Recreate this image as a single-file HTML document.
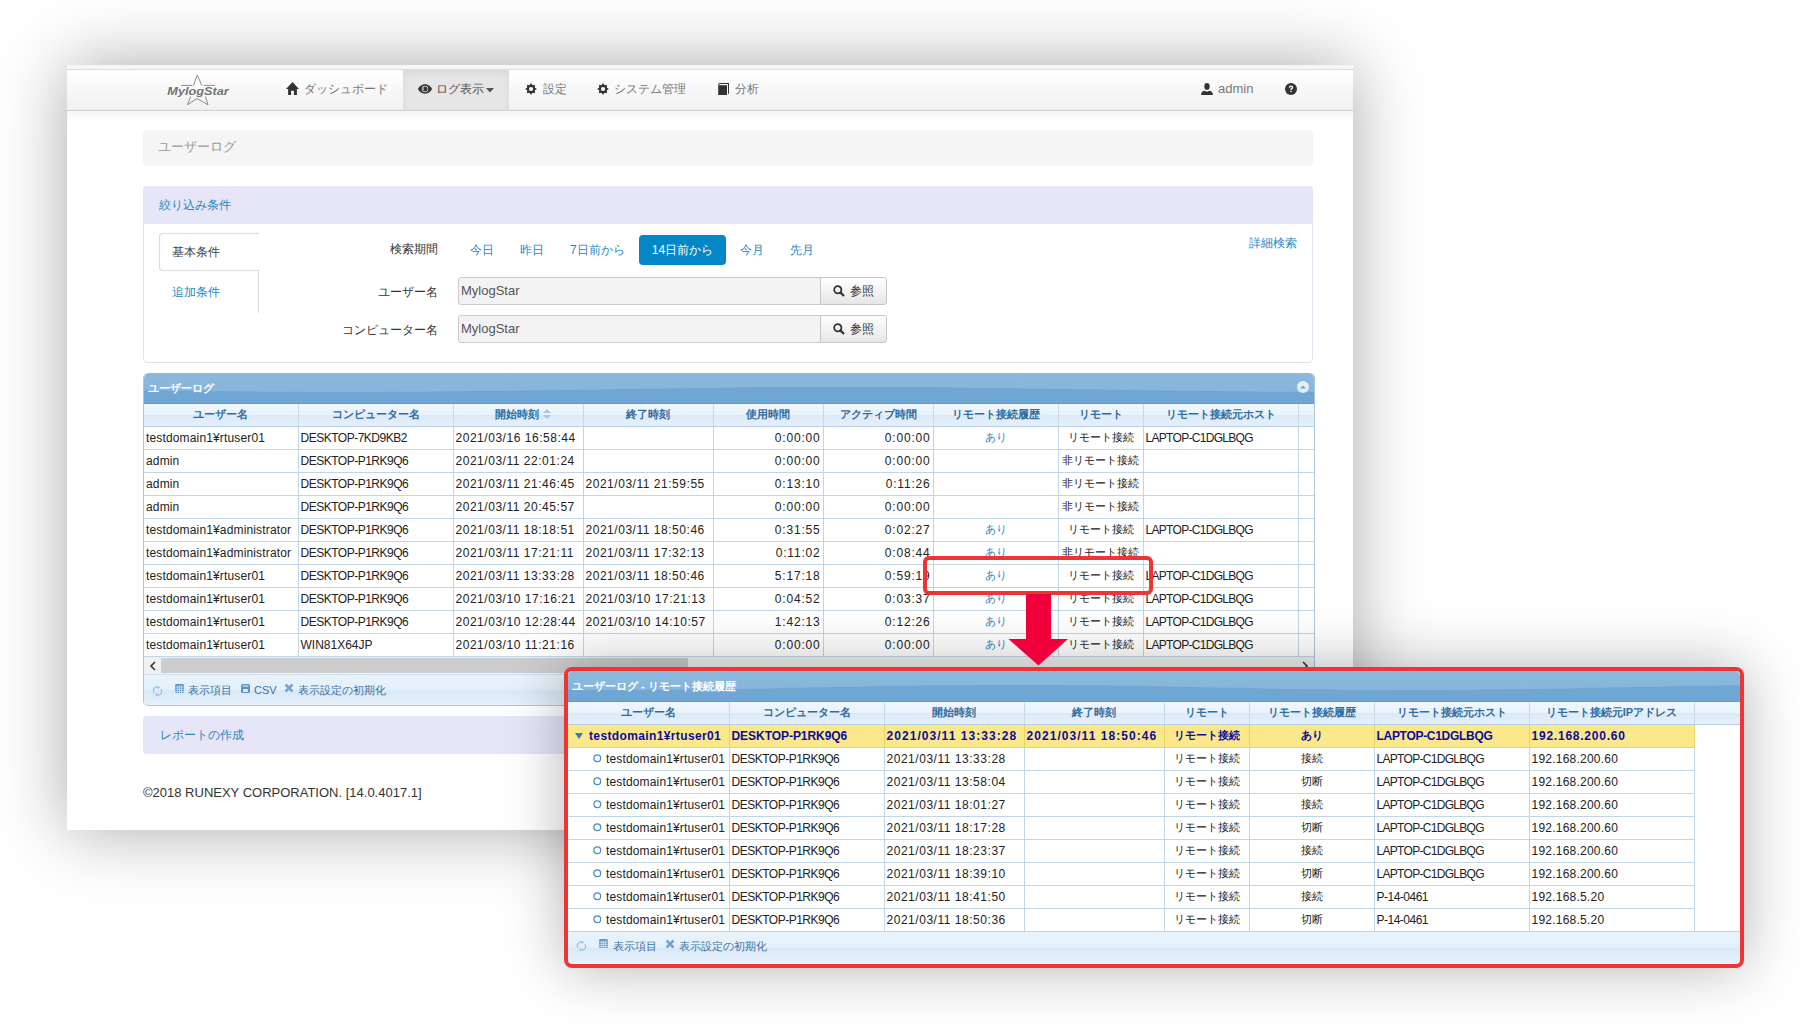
<!DOCTYPE html><html><head><meta charset="utf-8"><style>
*{box-sizing:border-box;margin:0;padding:0}
html,body{width:1805px;height:1031px;overflow:hidden;background:#fff}
body{position:relative;font-family:"Liberation Sans",sans-serif;font-size:12px;color:#222}
.abs{position:absolute;white-space:nowrap}
#win{position:absolute;left:67px;top:65px;width:1286px;height:765px;background:#fff;box-shadow:0 0 66px rgba(0,0,0,.34)}
#strip{position:absolute;left:67px;top:65px;width:1286px;height:4px;background:#f6f6f6}
#nav{position:absolute;left:67px;top:69px;width:1286px;height:42px;background:linear-gradient(#fff,#f1f1f1);border-top:1px solid #dcdcdc;border-bottom:1px solid #cfcfcf}
#navshadow{position:absolute;left:67px;top:111px;width:1286px;height:10px;background:linear-gradient(rgba(0,0,0,.035),rgba(0,0,0,0))}
.navtxt{position:absolute;top:81px;font-size:12px;line-height:16px;color:#777;white-space:nowrap}
#active{position:absolute;left:403px;top:70px;width:106px;height:40px;background:#e6e6e6;box-shadow:inset 0 3px 9px rgba(0,0,0,.06)}
.ico{position:absolute}
#crumb{position:absolute;left:143px;top:130px;width:1170px;height:36px;background:#f5f5f5;border-radius:4px}
#crumb span{position:absolute;left:15px;top:9px;font-size:13px;line-height:16px;color:#9a9a9a}
#filter{position:absolute;left:143px;top:186px;width:1170px;height:177px;border:1px solid #e2e2ee;border-radius:4px;background:#fff}
#filterhd{position:absolute;left:143px;top:186px;width:1170px;height:38px;background:#e6e6f8;border-radius:4px 4px 0 0}
.link{color:#2a88c5}
.t12{font-size:12px;line-height:16px}
.lbl{position:absolute;font-size:12px;line-height:16px;color:#333;white-space:nowrap;text-align:right;width:120px}
.pbtn{position:absolute;font-size:12px;line-height:16px;color:#2a88c5;white-space:nowrap}
#btn14{position:absolute;left:639px;top:235px;width:87px;height:30px;background:#0487c9;border-radius:4px;color:#fff;font-size:12px;line-height:30px;text-align:center}
.inp{position:absolute;left:458px;width:363px;height:28px;background:#f4f3f3;border:1px solid #cbcbcb;border-radius:3px 0 0 3px;font-size:13px;line-height:26px;padding-left:2px;color:#555}
.refbtn{position:absolute;left:820px;width:67px;height:28px;background:linear-gradient(#fff,#e6e6e6);border:1px solid #c6c6c6;border-radius:0 3px 3px 0;font-size:12px;line-height:26px;color:#333}
.grid{position:absolute;overflow:hidden}
.ghd{position:absolute;left:0;top:0;right:0;height:30px;border-radius:5px 5px 0 0;overflow:hidden}
.ghd span{position:absolute;left:4px;top:7px;color:#fff;font-weight:bold;font-size:11px;line-height:16px}
table{border-collapse:collapse;table-layout:fixed;position:absolute;left:0}
th{height:22px;background:linear-gradient(#eff6fd 0%,#e9f3fc 48%,#dce9f7 52%,#e5f0fb 100%);color:#2f6c9f;font-weight:bold;font-size:11px;border-right:1px solid #c6d9ea;border-bottom:1px solid #b9d0e4;white-space:nowrap;overflow:hidden;text-align:center;padding:0}
td{height:23px;border-right:1px solid #bfd5e8;border-bottom:1px solid #bfd5e8;white-space:nowrap;overflow:hidden;font-size:12px;padding:0 2px;color:#222;background:#fff}
td.r{text-align:right}
td.c{text-align:center}
.j{font-size:11px}
.aari{color:#2a88c5;font-size:11px}
.lu{letter-spacing:.15px}.lp{letter-spacing:-.5px}.ld{letter-spacing:.53px}.lh{letter-spacing:-.7px}.li{letter-spacing:.23px}.lt{letter-spacing:.8px}
tr.sel td{background:#fbe88b;color:#0c0c9c;font-weight:bold;border-bottom-color:#ecd26a;border-right-color:#ecd26a}
tr.sel .lu{letter-spacing:.37px}tr.sel .lp{letter-spacing:-.05px}tr.sel .ld{letter-spacing:1.05px}tr.sel .lh{letter-spacing:-.3px}tr.sel .li{letter-spacing:.77px}
.gft{position:absolute;left:0;right:0;background:linear-gradient(#e9f3fc 0%,#e5f0fb 45%,#d9e9f8 52%,#e8f2fb 100%);}
.gft span{position:absolute;color:#3b70a2;font-size:11px;line-height:16px;white-space:nowrap}
.gft svg{position:absolute}
</style></head><body>
<div id="win"></div>
<div id="strip"></div>
<div id="nav"></div>
<div id="navshadow"></div>
<div id="active"></div>
<svg class="ico" style="left:165px;top:72px" width="68" height="36" viewBox="0 0 68 36">
<path d="M32.3 3 L28.5 13.4 M32.3 3 L36.8 13.4 M16 13.4 L27.4 13.4 M38.6 13.4 L50 13.4 M25.7 24.5 L22.4 32.8 L32 26.5 L43 32.8 L40.5 24.5" fill="none" stroke="#8a8a8a" stroke-width="1"/>
<text x="2.3" y="23" font-family="Liberation Sans" font-size="11" font-weight="bold" font-style="italic" fill="#747474" textLength="61.5" lengthAdjust="spacingAndGlyphs">MylogStar</text>
</svg>
<svg class="ico" style="left:286px;top:82px" width="13" height="13" viewBox="0 0 13 13"><path d="M6.5 0 L0 6.9 H2.1 V13 H5.1 V8.7 H7.9 V13 H10.9 V6.9 H13Z" fill="#333"/></svg>
<span class="navtxt" style="left:304px">ダッシュボード</span>
<svg class="ico" style="left:418px;top:84px" width="14" height="10" viewBox="0 0 14 10"><path d="M7 0.3C3.5 0.3 1 2.8 0 5C1 7.2 3.5 9.7 7 9.7C10.5 9.7 13 7.2 14 5C13 2.8 10.5 0.3 7 0.3Z" fill="#333"/><circle cx="7" cy="5" r="3.2" fill="#e6e6e6"/><circle cx="7" cy="5" r="2.5" fill="#333"/><path d="M5.6 3.6A1.8 1.8 0 0 0 5.9 6" fill="none" stroke="#e6e6e6" stroke-width=".7"/></svg>
<span class="navtxt" style="left:436px;color:#555">ログ表示</span>
<svg class="ico" style="left:486px;top:88px" width="8" height="5" viewBox="0 0 8 5"><path d="M0 0H8L4 4.5Z" fill="#555"/></svg>
<svg class="ico" style="left:525px;top:83px" width="12" height="12" viewBox="0 0 12 12"><path d="M9.47 4.45L11.90 6.00L9.47 7.55ZM9.55 7.36L10.17 10.17L7.36 9.55ZM7.55 9.47L6.00 11.90L4.45 9.47ZM4.64 9.55L1.83 10.17L2.45 7.36ZM2.53 7.55L0.10 6.00L2.53 4.45ZM2.45 4.64L1.83 1.83L4.64 2.45ZM4.45 2.53L6.00 0.10L7.55 2.53ZM7.36 2.45L10.17 1.83L9.55 4.64Z" fill="#333"/><circle cx="6" cy="6" r="4.2" fill="#333"/><circle cx="6" cy="6" r="2.1" fill="#f8f8f8"/></svg>
<span class="navtxt" style="left:543px">設定</span>
<svg class="ico" style="left:597px;top:83px" width="12" height="12" viewBox="0 0 12 12"><path d="M9.47 4.45L11.90 6.00L9.47 7.55ZM9.55 7.36L10.17 10.17L7.36 9.55ZM7.55 9.47L6.00 11.90L4.45 9.47ZM4.64 9.55L1.83 10.17L2.45 7.36ZM2.53 7.55L0.10 6.00L2.53 4.45ZM2.45 4.64L1.83 1.83L4.64 2.45ZM4.45 2.53L6.00 0.10L7.55 2.53ZM7.36 2.45L10.17 1.83L9.55 4.64Z" fill="#333"/><circle cx="6" cy="6" r="4.2" fill="#333"/><circle cx="6" cy="6" r="2.1" fill="#f8f8f8"/></svg>
<span class="navtxt" style="left:614px">システム管理</span>
<svg class="ico" style="left:718px;top:83px" width="11" height="12" viewBox="0 0 11 12"><path d="M0.2 2Q0.2 0 2 0H11V10.8H10V1H2Q1.2 1 1.2 2.2Z" fill="#333"/><rect x="0.2" y="2.2" width="8.8" height="9.8" fill="#333"/></svg>
<span class="navtxt" style="left:735px">分析</span>
<svg class="ico" style="left:1201px;top:83px" width="12" height="12" viewBox="0 0 12 12"><ellipse cx="6" cy="3.4" rx="2.7" ry="3.4" fill="#333"/><path d="M0 12Q0.2 8.3 3.6 7.7L6 8.8L8.4 7.7Q11.8 8.3 12 12Z" fill="#333"/></svg>
<span class="navtxt" style="left:1218px;font-size:13px">admin</span>
<svg class="ico" style="left:1285px;top:83px" width="12" height="12" viewBox="0 0 12 12"><circle cx="6" cy="6" r="6" fill="#333"/><path d="M4.5 4.7Q4.5 3.1 6 3.1Q7.5 3.1 7.5 4.4Q7.5 5.2 6.6 5.7Q6 6 6 6.9" fill="none" stroke="#fff" stroke-width="1.4"/><rect x="5.3" y="7.8" width="1.4" height="1.3" fill="#fff"/></svg>

<div id="crumb"><span>ユーザーログ</span></div>

<div id="filter"></div>
<div id="filterhd"></div>
<span class="abs link t12" style="left:159px;top:197px">絞り込み条件</span>
<div class="abs" style="left:159px;top:233px;width:100px;height:38px;border:1px solid #dcdcdc;border-right:none;border-radius:4px 0 0 4px;background:#fff"></div>
<div class="abs" style="left:258px;top:270px;width:1px;height:43px;background:#dcdcdc"></div>
<span class="abs t12" style="left:172px;top:244px;color:#444">基本条件</span>
<span class="abs link t12" style="left:172px;top:284px">追加条件</span>
<span class="lbl" style="left:318px;top:241px">検索期間</span>
<span class="pbtn" style="left:470px;top:242px">今日</span>
<span class="pbtn" style="left:520px;top:242px">昨日</span>
<span class="pbtn" style="left:570px;top:242px">7日前から</span>
<div id="btn14">14日前から</div>
<span class="pbtn" style="left:740px;top:242px">今月</span>
<span class="pbtn" style="left:790px;top:242px">先月</span>
<span class="abs link t12" style="left:1249px;top:235px">詳細検索</span>
<span class="lbl" style="left:318px;top:284px">ユーザー名</span>
<span class="lbl" style="left:318px;top:322px">コンピューター名</span>
<div class="inp" style="top:277px">MylogStar</div>
<div class="refbtn" style="top:277px"><svg width="12" height="12" viewBox="0 0 12 12" style="position:absolute;left:12px;top:7px"><circle cx="4.8" cy="4.8" r="3.6" fill="none" stroke="#333" stroke-width="1.8"/><path d="M7.4 7.4L11 11" stroke="#333" stroke-width="2.2"/></svg><span style="position:absolute;left:29px">参照</span></div>
<div class="inp" style="top:315px">MylogStar</div>
<div class="refbtn" style="top:315px"><svg width="12" height="12" viewBox="0 0 12 12" style="position:absolute;left:12px;top:7px"><circle cx="4.8" cy="4.8" r="3.6" fill="none" stroke="#333" stroke-width="1.8"/><path d="M7.4 7.4L11 11" stroke="#333" stroke-width="2.2"/></svg><span style="position:absolute;left:29px">参照</span></div>

<div class="grid" style="left:143px;top:373px;width:1172px;height:333px;border:1px solid #a9c8e2;border-top:none;border-radius:5px;background:#fff">
 <div class="ghd" style="height:31px"><svg width="1172" height="31" viewBox="0 0 1172 31" style="position:absolute;left:0;top:0"><defs><linearGradient id="g1172" x1="0" y1="0" x2="0" y2="1"><stop offset="0" stop-color="#8cb9dd"/><stop offset="1" stop-color="#84b3d9"/></linearGradient></defs><rect width="1172" height="31" fill="url(#g1172)"/><path d="M0,17.2 L0,17.2 L20,17.5 L40,17.8 L60,18.1 L80,18.3 L100,18.5 L120,18.7 L140,18.8 L160,18.9 L180,19.0 L200,19.0 L220,19.0 L240,18.9 L260,18.8 L280,18.7 L300,18.5 L320,18.3 L340,18.1 L360,17.9 L380,17.6 L400,17.3 L420,17.0 L440,16.7 L460,16.4 L480,16.1 L500,15.8 L520,15.5 L540,15.2 L560,14.9 L580,14.7 L600,14.5 L620,14.3 L640,14.2 L660,14.1 L680,14.0 L700,14.0 L720,14.0 L740,14.1 L760,14.2 L780,14.3 L800,14.5 L820,14.7 L840,14.9 L860,15.1 L880,15.4 L900,15.7 L920,16.0 L940,16.3 L960,16.6 L980,16.9 L1000,17.2 L1020,17.5 L1040,17.8 L1060,18.1 L1080,18.3 L1100,18.5 L1120,18.7 L1140,18.8 L1160,18.9 L1180,19.0 L1172,31 L0,31Z" fill="#6fa6d3"/><rect y="30" width="1172" height="1" fill="#5f9ccd"/></svg><span>ユーザーログ</span><svg style="position:absolute;right:5px;top:8px" width="12" height="12" viewBox="0 0 12 12"><circle cx="6" cy="6" r="6" fill="#e4eef7"/><path d="M3 7.5L6 4.5L9 7.5Z" fill="#6aa2d0"/></svg></div>
 <table style="top:31px;width:1172px"><colgroup><col style="width:154px"><col style="width:155px"><col style="width:130px"><col style="width:130px"><col style="width:110px"><col style="width:110px"><col style="width:125px"><col style="width:85px"><col style="width:155px"><col style="width:18px"></colgroup><tr><th>ユーザー名</th><th>コンピューター名</th><th><span style="margin-left:10px">開始時刻<svg width='8' height='10' viewBox='0 0 8 10' style='vertical-align:-1px;margin-left:4px'><path d='M0 4 L4 0 L8 4Z' fill='#a9c6e0'/><path d='M0 6 L4 10 L8 6Z' fill='#a9c6e0'/></svg></span></th><th>終了時刻</th><th>使用時間</th><th>アクティブ時間</th><th>リモート接続履歴</th><th>リモート</th><th>リモート接続元ホスト</th><th></th></tr><tr><td class=""><span class="lu">testdomain1¥rtuser01</span></td><td class=""><span class="lp">DESKTOP-7KD9KB2</span></td><td class=""><span class="ld">2021/03/16 16:58:44</span></td><td class=""></td><td class="r"><span class="lt">0:00:00</span></td><td class="r"><span class="lt">0:00:00</span></td><td class="c"><span class="aari">あり</span></td><td class="c"><span class="j">リモート接続</span></td><td class=""><span class="lh">LAPTOP-C1DGLBQG</span></td><td class=""></td></tr><tr><td class=""><span class="lu">admin</span></td><td class=""><span class="lp">DESKTOP-P1RK9Q6</span></td><td class=""><span class="ld">2021/03/11 22:01:24</span></td><td class=""></td><td class="r"><span class="lt">0:00:00</span></td><td class="r"><span class="lt">0:00:00</span></td><td class="c"></td><td class="c"><span class="j">非リモート接続</span></td><td class=""></td><td class=""></td></tr><tr><td class=""><span class="lu">admin</span></td><td class=""><span class="lp">DESKTOP-P1RK9Q6</span></td><td class=""><span class="ld">2021/03/11 21:46:45</span></td><td class=""><span class="ld">2021/03/11 21:59:55</span></td><td class="r"><span class="lt">0:13:10</span></td><td class="r"><span class="lt">0:11:26</span></td><td class="c"></td><td class="c"><span class="j">非リモート接続</span></td><td class=""></td><td class=""></td></tr><tr><td class=""><span class="lu">admin</span></td><td class=""><span class="lp">DESKTOP-P1RK9Q6</span></td><td class=""><span class="ld">2021/03/11 20:45:57</span></td><td class=""></td><td class="r"><span class="lt">0:00:00</span></td><td class="r"><span class="lt">0:00:00</span></td><td class="c"></td><td class="c"><span class="j">非リモート接続</span></td><td class=""></td><td class=""></td></tr><tr><td class=""><span class="lu">testdomain1¥administrator</span></td><td class=""><span class="lp">DESKTOP-P1RK9Q6</span></td><td class=""><span class="ld">2021/03/11 18:18:51</span></td><td class=""><span class="ld">2021/03/11 18:50:46</span></td><td class="r"><span class="lt">0:31:55</span></td><td class="r"><span class="lt">0:02:27</span></td><td class="c"><span class="aari">あり</span></td><td class="c"><span class="j">リモート接続</span></td><td class=""><span class="lh">LAPTOP-C1DGLBQG</span></td><td class=""></td></tr><tr><td class=""><span class="lu">testdomain1¥administrator</span></td><td class=""><span class="lp">DESKTOP-P1RK9Q6</span></td><td class=""><span class="ld">2021/03/11 17:21:11</span></td><td class=""><span class="ld">2021/03/11 17:32:13</span></td><td class="r"><span class="lt">0:11:02</span></td><td class="r"><span class="lt">0:08:44</span></td><td class="c"><span class="aari">あり</span></td><td class="c"><span class="j">非リモート接続</span></td><td class=""></td><td class=""></td></tr><tr><td class=""><span class="lu">testdomain1¥rtuser01</span></td><td class=""><span class="lp">DESKTOP-P1RK9Q6</span></td><td class=""><span class="ld">2021/03/11 13:33:28</span></td><td class=""><span class="ld">2021/03/11 18:50:46</span></td><td class="r"><span class="lt">5:17:18</span></td><td class="r"><span class="lt">0:59:19</span></td><td class="c"><span class="aari">あり</span></td><td class="c"><span class="j">リモート接続</span></td><td class=""><span class="lh">LAPTOP-C1DGLBQG</span></td><td class=""></td></tr><tr><td class=""><span class="lu">testdomain1¥rtuser01</span></td><td class=""><span class="lp">DESKTOP-P1RK9Q6</span></td><td class=""><span class="ld">2021/03/10 17:16:21</span></td><td class=""><span class="ld">2021/03/10 17:21:13</span></td><td class="r"><span class="lt">0:04:52</span></td><td class="r"><span class="lt">0:03:37</span></td><td class="c"><span class="aari">あり</span></td><td class="c"><span class="j">リモート接続</span></td><td class=""><span class="lh">LAPTOP-C1DGLBQG</span></td><td class=""></td></tr><tr><td class=""><span class="lu">testdomain1¥rtuser01</span></td><td class=""><span class="lp">DESKTOP-P1RK9Q6</span></td><td class=""><span class="ld">2021/03/10 12:28:44</span></td><td class=""><span class="ld">2021/03/10 14:10:57</span></td><td class="r"><span class="lt">1:42:13</span></td><td class="r"><span class="lt">0:12:26</span></td><td class="c"><span class="aari">あり</span></td><td class="c"><span class="j">リモート接続</span></td><td class=""><span class="lh">LAPTOP-C1DGLBQG</span></td><td class=""></td></tr><tr><td class=""><span class="lu">testdomain1¥rtuser01</span></td><td class=""><span class="lp"><span style='letter-spacing:0'>WIN81X64JP</span></span></td><td class=""><span class="ld">2021/03/10 11:21:16</span></td><td class=""></td><td class="r"><span class="lt">0:00:00</span></td><td class="r"><span class="lt">0:00:00</span></td><td class="c"><span class="aari">あり</span></td><td class="c"><span class="j">リモート接続</span></td><td class=""><span class="lh">LAPTOP-C1DGLBQG</span></td><td class=""></td></tr></table>
 <div class="abs" style="left:0;top:284px;width:1172px;height:17px;background:#f1f1f1"></div>
 <div class="abs" style="left:17px;top:285px;width:527px;height:15px;background:#cdcdcd"></div>
 <svg class="abs" style="left:5px;top:288px" width="7" height="10" viewBox="0 0 7 10"><path d="M6 1L2 5L6 9" fill="none" stroke="#333" stroke-width="1.6"/></svg>
 <svg class="abs" style="left:1158px;top:288px" width="7" height="10" viewBox="0 0 7 10"><path d="M1 1L5 5L1 9" fill="none" stroke="#333" stroke-width="1.6"/></svg>
 <div class="gft" style="top:301px;height:32px;border-top:1px solid #cfe0ef">
  <svg width="11" height="12" viewBox="0 0 11 12" style="left:8px;top:10px"><path d="M2.2 7.8A3.6 3.6 0 0 1 6.5 2.3M8.8 4.2A3.6 3.6 0 0 1 4.5 9.7" fill="none" stroke="#95bfe3" stroke-width="1.2"/><path d="M5.6 0.6L8 2.4L5.6 4Z M5.4 8L3 9.6L5.4 11.4Z" fill="#95bfe3"/></svg>
  <svg width="9" height="9" viewBox="0 0 9 9" style="left:31px;top:9px"><rect x="0" y="0" width="9" height="9" rx="1.6" fill="#5b94c7"/><path d="M0 3.1H9M0 5.3H9M0 7.4H9M2.6 1.5V9M4.6 1.5V9M6.6 1.5V9" stroke="#e2eef9" stroke-width=".7"/></svg><span style="left:44px;top:7px">表示項目</span>
  <svg width="9" height="9" viewBox="0 0 9 9" style="left:97px;top:9px"><rect width="9" height="9" rx="1.6" fill="#5b94c7"/><rect x="1.6" y="1.4" width="5.8" height="1.1" fill="#e2eef9"/><rect x="2.2" y="5" width="4.6" height="3" fill="#e2eef9"/></svg><span style="left:110px;top:7px">CSV</span>
  <svg width="10" height="10" viewBox="0 0 10 10" style="left:140px;top:8px"><path d="M1.5 1.5L8.5 8.5M8.5 1.5L1.5 8.5" stroke="#74a5d2" stroke-width="2.5"/></svg><span style="left:154px;top:7px">表示設定の初期化</span>
 </div>
</div>

<div class="abs" style="left:143px;top:716px;width:1170px;height:38px;background:#e6e6f8;border-radius:4px"></div>
<span class="abs link t12" style="left:160px;top:727px">レポートの作成</span>
<span class="abs" style="left:143px;top:785px;font-size:13px;line-height:16px;color:#333">©2018 RUNEXY CORPORATION. [14.0.4017.1]</span>



<div class="abs" style="left:564px;top:667px;width:1180px;height:301px;border-radius:8px;box-shadow:0 0 60px rgba(0,0,0,.3)"></div>
<div class="grid" style="left:568px;top:671px;width:1172px;height:293px;background:#fff;border-radius:4px 4px 2px 2px">
 <div class="ghd" style="height:31px"><svg width="1172" height="31" viewBox="0 0 1172 31" style="position:absolute;left:0;top:0"><defs><linearGradient id="g1172" x1="0" y1="0" x2="0" y2="1"><stop offset="0" stop-color="#8cb9dd"/><stop offset="1" stop-color="#84b3d9"/></linearGradient></defs><rect width="1172" height="31" fill="url(#g1172)"/><path d="M0,18.8 L0,18.8 L20,18.9 L40,19.0 L60,19.0 L80,18.9 L100,18.8 L120,18.6 L140,18.4 L160,18.1 L180,17.8 L200,17.4 L220,17.0 L240,16.6 L260,16.2 L280,15.9 L300,15.5 L320,15.1 L340,14.8 L360,14.6 L380,14.3 L400,14.2 L420,14.1 L440,14.0 L460,14.0 L480,14.1 L500,14.2 L520,14.4 L540,14.6 L560,14.9 L580,15.2 L600,15.6 L620,16.0 L640,16.4 L660,16.8 L680,17.1 L700,17.5 L720,17.9 L740,18.2 L760,18.4 L780,18.7 L800,18.8 L820,18.9 L840,19.0 L860,19.0 L880,18.9 L900,18.8 L920,18.6 L940,18.4 L960,18.1 L980,17.8 L1000,17.4 L1020,17.0 L1040,16.6 L1060,16.2 L1080,15.9 L1100,15.5 L1120,15.1 L1140,14.8 L1160,14.6 L1180,14.3 L1172,31 L0,31Z" fill="#6fa6d3"/><rect y="30" width="1172" height="1" fill="#5f9ccd"/></svg><span>ユーザーログ - リモート接続履歴</span></div>
 <table style="top:31px;width:1172px"><colgroup><col style="width:161px"><col style="width:155px"><col style="width:140px"><col style="width:140px"><col style="width:85px"><col style="width:125px"><col style="width:155px"><col style="width:165px"><col style="width:46px"></colgroup><tr><th>ユーザー名</th><th>コンピューター名</th><th>開始時刻</th><th>終了時刻</th><th>リモート</th><th>リモート接続履歴</th><th>リモート接続元ホスト</th><th>リモート接続元IPアドレス</th><th></th></tr><tr class="sel"><td style="padding-left:7px"><svg width="8" height="6" viewBox="0 0 8 6" style="vertical-align:1px;margin-right:6px"><path d="M0 0H8L4 6Z" fill="#2f7fc6"/></svg><span class="lu">testdomain1¥rtuser01</span></td><td><span class="lp">DESKTOP-P1RK9Q6</span></td><td><span class="ld">2021/03/11 13:33:28</span></td><td><span class="ld">2021/03/11 18:50:46</span></td><td class="c j">リモート接続</td><td class="c j">あり</td><td><span class="lh">LAPTOP-C1DGLBQG</span></td><td><span class="li">192.168.200.60</span></td><td style="background:#fff;border-bottom:1px solid #fff;border-right:none"></td></tr><tr><td style="position:relative"><svg width="9" height="9" viewBox="0 0 9 9" style="position:absolute;left:25px;top:6px"><circle cx="4.3" cy="4.3" r="3.4" fill="none" stroke="#4a8dc6" stroke-width="1.2"/></svg><span class="lu" style="margin-left:36px">testdomain1¥rtuser01</span></td><td><span class="lp">DESKTOP-P1RK9Q6</span></td><td><span class="ld">2021/03/11 13:33:28</span></td><td></td><td class="c j">リモート接続</td><td class="c j">接続</td><td><span class="lh">LAPTOP-C1DGLBQG</span></td><td><span class="li">192.168.200.60</span></td><td style="border:none"></td></tr><tr><td style="position:relative"><svg width="9" height="9" viewBox="0 0 9 9" style="position:absolute;left:25px;top:6px"><circle cx="4.3" cy="4.3" r="3.4" fill="none" stroke="#4a8dc6" stroke-width="1.2"/></svg><span class="lu" style="margin-left:36px">testdomain1¥rtuser01</span></td><td><span class="lp">DESKTOP-P1RK9Q6</span></td><td><span class="ld">2021/03/11 13:58:04</span></td><td></td><td class="c j">リモート接続</td><td class="c j">切断</td><td><span class="lh">LAPTOP-C1DGLBQG</span></td><td><span class="li">192.168.200.60</span></td><td style="border:none"></td></tr><tr><td style="position:relative"><svg width="9" height="9" viewBox="0 0 9 9" style="position:absolute;left:25px;top:6px"><circle cx="4.3" cy="4.3" r="3.4" fill="none" stroke="#4a8dc6" stroke-width="1.2"/></svg><span class="lu" style="margin-left:36px">testdomain1¥rtuser01</span></td><td><span class="lp">DESKTOP-P1RK9Q6</span></td><td><span class="ld">2021/03/11 18:01:27</span></td><td></td><td class="c j">リモート接続</td><td class="c j">接続</td><td><span class="lh">LAPTOP-C1DGLBQG</span></td><td><span class="li">192.168.200.60</span></td><td style="border:none"></td></tr><tr><td style="position:relative"><svg width="9" height="9" viewBox="0 0 9 9" style="position:absolute;left:25px;top:6px"><circle cx="4.3" cy="4.3" r="3.4" fill="none" stroke="#4a8dc6" stroke-width="1.2"/></svg><span class="lu" style="margin-left:36px">testdomain1¥rtuser01</span></td><td><span class="lp">DESKTOP-P1RK9Q6</span></td><td><span class="ld">2021/03/11 18:17:28</span></td><td></td><td class="c j">リモート接続</td><td class="c j">切断</td><td><span class="lh">LAPTOP-C1DGLBQG</span></td><td><span class="li">192.168.200.60</span></td><td style="border:none"></td></tr><tr><td style="position:relative"><svg width="9" height="9" viewBox="0 0 9 9" style="position:absolute;left:25px;top:6px"><circle cx="4.3" cy="4.3" r="3.4" fill="none" stroke="#4a8dc6" stroke-width="1.2"/></svg><span class="lu" style="margin-left:36px">testdomain1¥rtuser01</span></td><td><span class="lp">DESKTOP-P1RK9Q6</span></td><td><span class="ld">2021/03/11 18:23:37</span></td><td></td><td class="c j">リモート接続</td><td class="c j">接続</td><td><span class="lh">LAPTOP-C1DGLBQG</span></td><td><span class="li">192.168.200.60</span></td><td style="border:none"></td></tr><tr><td style="position:relative"><svg width="9" height="9" viewBox="0 0 9 9" style="position:absolute;left:25px;top:6px"><circle cx="4.3" cy="4.3" r="3.4" fill="none" stroke="#4a8dc6" stroke-width="1.2"/></svg><span class="lu" style="margin-left:36px">testdomain1¥rtuser01</span></td><td><span class="lp">DESKTOP-P1RK9Q6</span></td><td><span class="ld">2021/03/11 18:39:10</span></td><td></td><td class="c j">リモート接続</td><td class="c j">切断</td><td><span class="lh">LAPTOP-C1DGLBQG</span></td><td><span class="li">192.168.200.60</span></td><td style="border:none"></td></tr><tr><td style="position:relative"><svg width="9" height="9" viewBox="0 0 9 9" style="position:absolute;left:25px;top:6px"><circle cx="4.3" cy="4.3" r="3.4" fill="none" stroke="#4a8dc6" stroke-width="1.2"/></svg><span class="lu" style="margin-left:36px">testdomain1¥rtuser01</span></td><td><span class="lp">DESKTOP-P1RK9Q6</span></td><td><span class="ld">2021/03/11 18:41:50</span></td><td></td><td class="c j">リモート接続</td><td class="c j">接続</td><td><span class="lp">P-14-0461</span></td><td><span class="li">192.168.5.20</span></td><td style="border:none"></td></tr><tr><td style="position:relative"><svg width="9" height="9" viewBox="0 0 9 9" style="position:absolute;left:25px;top:6px"><circle cx="4.3" cy="4.3" r="3.4" fill="none" stroke="#4a8dc6" stroke-width="1.2"/></svg><span class="lu" style="margin-left:36px">testdomain1¥rtuser01</span></td><td><span class="lp">DESKTOP-P1RK9Q6</span></td><td><span class="ld">2021/03/11 18:50:36</span></td><td></td><td class="c j">リモート接続</td><td class="c j">切断</td><td><span class="lp">P-14-0461</span></td><td><span class="li">192.168.5.20</span></td><td style="border:none"></td></tr></table>
 <div class="gft" style="top:260px;height:33px;border-top:1px solid #bcd3e6">
  <svg width="11" height="12" viewBox="0 0 11 12" style="left:8px;top:8px"><path d="M2.2 7.8A3.6 3.6 0 0 1 6.5 2.3M8.8 4.2A3.6 3.6 0 0 1 4.5 9.7" fill="none" stroke="#95bfe3" stroke-width="1.2"/><path d="M5.6 0.6L8 2.4L5.6 4Z M5.4 8L3 9.6L5.4 11.4Z" fill="#95bfe3"/></svg>
  <svg width="9" height="9" viewBox="0 0 9 9" style="left:31px;top:7px"><rect x="0" y="0" width="9" height="9" rx="1.6" fill="#5b94c7"/><path d="M0 3.1H9M0 5.3H9M0 7.4H9M2.6 1.5V9M4.6 1.5V9M6.6 1.5V9" stroke="#e2eef9" stroke-width=".7"/></svg><span style="left:45px;top:6px">表示項目</span>
  <svg width="10" height="10" viewBox="0 0 10 10" style="left:97px;top:7px"><path d="M1.5 1.5L8.5 8.5M8.5 1.5L1.5 8.5" stroke="#74a5d2" stroke-width="2.5"/></svg><span style="left:111px;top:6px">表示設定の初期化</span>
 </div>
</div>
<div class="abs" style="left:564px;top:667px;width:1180px;height:301px;border:4px solid #ec3535;border-radius:8px"></div>
<div class="abs" style="left:923px;top:556px;width:230px;height:39px;border:4px solid #ec3535;border-radius:6px"></div>
<svg class="abs" style="left:1008px;top:594px" width="60" height="72" viewBox="0 0 60 72"><path d="M18 0H43V45H60L30.5 71.5L0.5 45H18Z" fill="#f0003a"/></svg>
</body></html>
